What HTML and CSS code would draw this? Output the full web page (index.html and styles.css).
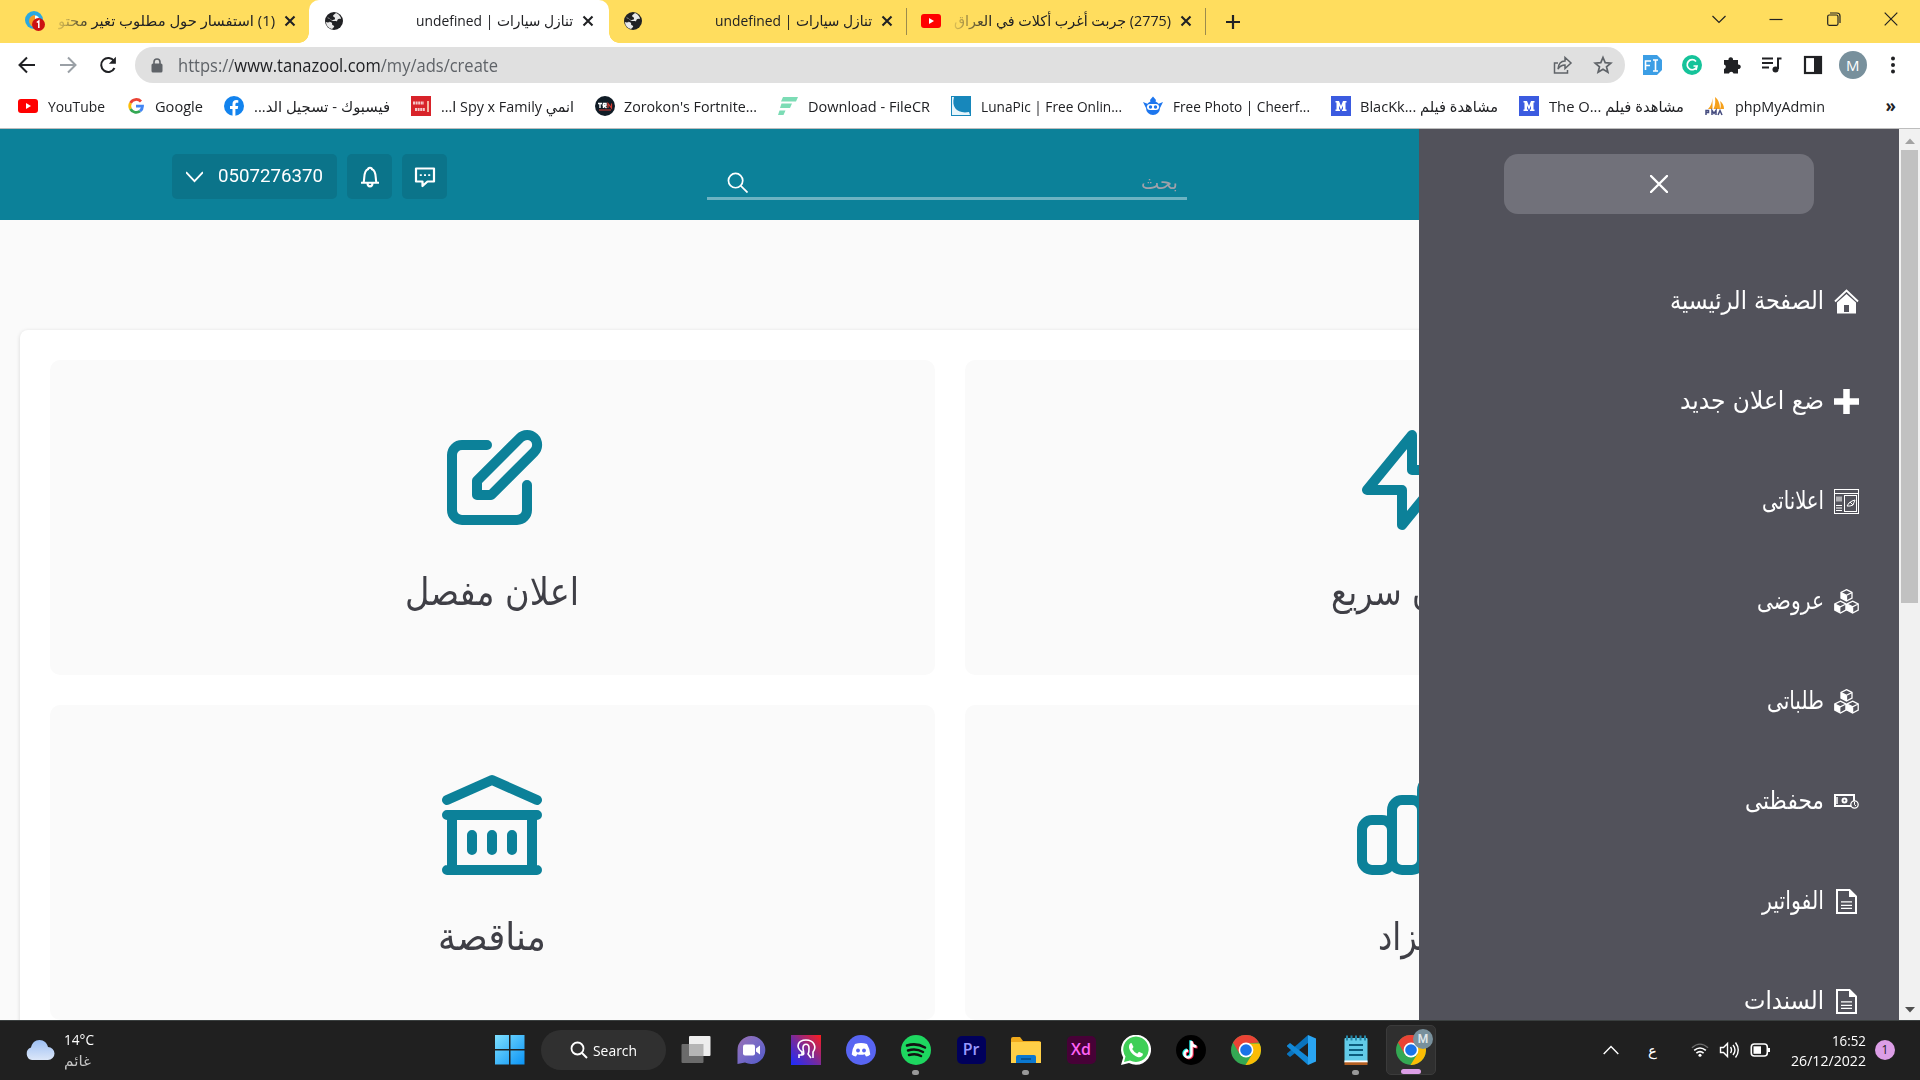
FILE: index.html
```html
<!DOCTYPE html>
<html lang="ar">
<head>
<meta charset="utf-8">
<title>تنازل سيارات</title>
<link rel="stylesheet" href="styles.css">
</head>
<body>
<svg class="defs" width="0" height="0">
  <symbol id="globe" viewBox="0 0 20 20"><circle cx="10" cy="10" r="9" fill="#202124"/><path d="M3 7c3-1 2 2 5 2s3-1 3-2-2-1-2-2 2-2 3-3c3 1 5 4 5 6-3-1-4 1-4 3-2 0-5 0-5 2s3 1 2 3l-2 2c-4-1-6-4-6-7 2 1 3 0 4 0" fill="#fff" opacity=".9"/><path d="M3 7c2 0 3 1 4 2s3 1 5 1 1 3-1 3-5-3-8-3z" fill="#202124"/></symbol>
  <symbol id="x" viewBox="0 0 12 12"><path d="M1.5 1.5l9 9m0-9l-9 9" stroke="#202124" stroke-width="2.1"/></symbol>
  <symbol id="yt" viewBox="0 0 20 20"><rect y="3" width="20" height="14" rx="3" fill="red"/><path d="M8 7l5 3-5 3z" fill="#fff"/></symbol>
  <symbol id="chrome" viewBox="0 0 30 30"><circle cx="15" cy="15" r="15" fill="#34a853"/><path d="M2 7.500A15 15 0 0 1 28 7.500L15 8.500 8.500 18.800z" fill="#ea4335"/><path d="M15 8.500H28.500A15 15 0 0 1 14.500 30L21.500 18.700z" fill="#fbbc04"/><circle cx="15" cy="15" r="7.400" fill="#fff"/><circle cx="15" cy="15" r="5.800" fill="#1a73e8"/></symbol>
  <symbol id="boxes" viewBox="0 0 25 25"><path d="M12.500.7l5.500 2.800v5.500l-5.500 3-5.500-3V3.500zM7 3.500l5.500 2.800L18 3.500M12.500 6.300V12M6.400 12.200l5.500 2.800v6l-5.500 3-5.600-3v-6zM.8 15l5.600 2.800 5.500-2.800M18.600 12.200l5.600 2.800v6l-5.600 3-5.500-3v-6zM13.100 15l5.500 2.800 5.600-2.800M18.600 17.800V24" fill="none" stroke="#fff" stroke-width="1.300"/><path d="M7 3.500l5.500 2.800V12L7 9zM.8 15l5.600 2.800V24L.8 21zM13.100 15l5.500 2.800V24l-5.500-3z" fill="#fff"/></symbol>
  <symbol id="doc" viewBox="0 0 25 25"><path d="M3 1h12.500L22 7.500V24H3z" fill="none" stroke="#fff" stroke-width="2"/><path d="M15 0v8h8z" fill="#fff"/><path d="M7 12.800h11M7 16.300h11M7 19.300h11" stroke="#fff" stroke-width="1.300"/></symbol>
  <symbol id="m" viewBox="0 0 20 20"><rect width="20" height="20" fill="#3b5be0"/><path d="M4.500 5H8l2 5 2-5h3.500v1.500h-1v7h1V15h-4.500v-1.500h1v-4L10 14l-2-4.500v4h1V15H4.500v-1.500h1v-7h-1z" fill="#fff"/></symbol>
</svg>

<header class="tabs">
  <div class="tab tab-first">
    <svg class="ico20" viewBox="0 0 20 20"><circle cx="9" cy="9" r="9" fill="#29a9e1"/><circle cx="10" cy="9" r="4.500" fill="#fff"/><path d="M10 4a6 6 0 0 0 0 12z" fill="#f59a23"/><circle cx="13.500" cy="13.500" r="6.500" fill="#c11"/><path d="M11.800 11.500l2-1.500v7" stroke="#fff" stroke-width="1.500" fill="none"/></svg>
    <span class="fade"><span class="fit" dir="rtl" data-w="217">(1) استفسار حول مطلوب تغير محتو</span></span>
    <svg class="close"><use href="#x"/></svg>
  </div>
  <div class="tab tab-active">
    <svg class="ico20"><use href="#globe"/></svg>
    <span class="fit" data-w="157">undefined | تنازل سيارات</span>
    <svg class="close"><use href="#x"/></svg>
  </div>
  <div class="tab tab-third">
    <svg class="ico20"><use href="#globe"/></svg>
    <span class="fit" data-w="157">undefined | تنازل سيارات</span>
    <svg class="close"><use href="#x"/></svg>
  </div>
  <div class="tab tab-fourth">
    <svg class="ico20"><use href="#yt"/></svg>
    <span class="fade"><span class="fit" dir="rtl" data-w="217">(2775) جربت أغرب أكلات في العراق</span></span>
    <svg class="close"><use href="#x"/></svg>
  </div>
  <svg class="plus" viewBox="0 0 14 14"><path d="M7 0v14M0 7h14" stroke="#202124" stroke-width="2.200"/></svg>
  <div class="window-buttons">
    <svg viewBox="0 0 14 14"><path d="M.5 4l6.500 6.500L13.500 4"/></svg>
    <svg viewBox="0 0 14 14"><path d="M.5 7.500h13"/></svg>
    <svg viewBox="0 0 14 14"><rect x=".7" y="3" width="10.300" height="10.300" rx="1.500"/><path d="M3 1h7a3 3 0 0 1 3 3v7"/></svg>
    <svg viewBox="0 0 14 14"><path d="M.7.7l12.600 12.600m0-12.600L.7 13.300"/></svg>
  </div>
</header>

<div class="toolbar">
  <svg class="nav" viewBox="0 0 20 20"><path d="M18 10H3m7-7.500L2.500 10l7.500 7.500" stroke="#202124"/></svg>
  <svg class="nav" viewBox="0 0 20 20"><path d="M2 10h15m-7-7.500l7.500 7.500-7.500 7.500" stroke="#9aa0a6"/></svg>
  <svg class="nav" viewBox="0 0 20 20"><path d="M16.500 13A7 7 0 1 1 16 6" stroke="#202124"/><path d="M17.900 1.800v7h-7z" fill="#202124"/></svg>
  <div class="address">
    <svg class="lock" viewBox="0 0 12 15"><path d="M3 6V4a3 3 0 0 1 6 0v2" fill="none" stroke="#5f6368" stroke-width="1.600"/><rect x=".5" y="5.500" width="11" height="9" rx="1.500" fill="#5f6368"/></svg>
    <span class="fit url" data-w="320">https://<em>www.tanazool.com</em>/my/ads/create</span>
    <svg class="act share" viewBox="0 0 20 20"><path d="M5 8H1.500v10h13v-3M5 14c.5-5 3-8 7-8V2.500l6 5.500-6 5.500V10c-3 0-5 1-7 4z"/></svg>
    <svg class="act" viewBox="0 0 20 20"><path d="M10 2.500l2.200 5.200 5.600.4-4.300 3.700 1.400 5.500-4.900-3-4.900 3 1.400-5.500-4.300-3.700 5.600-.4z" stroke-width="1.700"/></svg>
  </div>
  <div class="extensions">
    <svg viewBox="0 0 20 20"><path d="M1 0h14l5 5v10l-5 5H1z" fill="#3c9ee5"/><path d="M3.500 15V6H9M3.500 10.500H8M11 5h5M11 16h5M13.500 5v11" stroke="#fff" stroke-width="1.600" fill="none"/></svg>
    <svg viewBox="0 0 20 20"><circle cx="10" cy="10" r="10" fill="#15c39a"/><path d="M14 6.500A5 5 0 1 0 15 11h-3.500M15 11l-1 4" fill="none" stroke="#fff" stroke-width="1.700"/></svg>
    <svg viewBox="0 0 20 20"><path d="M2 5h4.500a2.300 2.300 0 1 1 4.500 0H16v4.500a2.300 2.300 0 1 1 0 4.500v4.500h-4.500a2.300 2.300 0 0 0-4.500 0H2V14a2.300 2.300 0 0 0 0-4.500z" fill="#202124"/></svg>
    <svg viewBox="0 0 20 20"><path d="M0 3.500h11M0 8h11M0 12.500h7M19.500 3.500H16V14" stroke="#202124" stroke-width="2" fill="none"/><circle cx="13.500" cy="14.500" r="3" fill="#202124"/></svg>
    <svg viewBox="0 0 20 20"><rect x="2" y="2" width="16" height="16" fill="none" stroke="#202124" stroke-width="2.200"/><path d="M11 2h7v16h-7z" fill="#202124"/></svg>
    <div class="avatar">M</div>
    <svg viewBox="0 0 20 20" fill="#202124"><circle cx="10" cy="3.500" r="2"/><circle cx="10" cy="10" r="2"/><circle cx="10" cy="16.500" r="2"/></svg>
  </div>
</div>

<nav class="bookmarks">
  <div><svg><use href="#yt"/></svg><span class="fit" data-w="57">YouTube</span></div>
  <div><svg viewBox="0 0 20 20" fill="none" stroke-width="2.800"><path d="M15 5.500A6.500 6.500 0 0 0 4.500 7" stroke="#ea4335"/><path d="M4.500 7a6.500 6.500 0 0 0 0 6" stroke="#fbbc05"/><path d="M4.500 13A6.500 6.500 0 0 0 14 15.200" stroke="#34a853"/><path d="M14 15.200A6.500 6.500 0 0 0 16.500 10.200H10" stroke="#4285f4"/></svg><span class="fit" data-w="48">Google</span></div>
  <div><svg viewBox="0 0 20 20"><circle cx="10" cy="10" r="10" fill="#1283ee"/><path d="M8.500 20v-7H6v-3h2.500V8c0-2.600 1.500-4 3.800-4l2 .2v2.500H13c-1.200 0-1.600.7-1.600 1.500V10h2.800l-.5 3h-2.300v7z" fill="#fff"/></svg><span class="fit" dir="rtl" data-w="136">فيسبوك - تسجيل الد...</span></div>
  <div><svg viewBox="0 0 20 20"><rect width="20" height="20" fill="#d8232a"/><path d="M2 7h11M4 13.500h10" stroke="#fff" stroke-width="3" stroke-dasharray="2 .6" opacity=".75"/><path d="M17 5v11" stroke="#f5b5a0" stroke-width="2"/></svg><span class="fit" dir="rtl" data-w="133">انمي Spy x Family ا...</span></div>
  <div><svg viewBox="0 0 20 20"><circle cx="10" cy="10" r="10" fill="#101c26"/><path d="M3 7.500h4M5 7v5M8.500 12V7.500h2.500v2H8.500l3 2.500" stroke="#fff" stroke-width="1.400" fill="none"/><path d="M13 12V7.500l3.500 4.500V7.500M4 14h12" stroke="#d43b32" stroke-width="1.200" fill="none"/></svg><span class="fit" data-w="133">Zorokon's Fortnite...</span></div>
  <div><svg viewBox="0 0 20 20" fill="#7cdcb5"><path d="M5 1h15l-2 4.500H3zM3.500 7.500H14L12 12H2zM1.500 14.500h6L5.500 19H0z"/></svg><span class="fit" data-w="122">Download - FileCR</span></div>
  <div><svg viewBox="0 0 20 20"><rect width="20" height="20" fill="#1787bb"/><path d="M3 1c-3 11 4 17 15 15l1 3H1V1z" fill="#e6f5fb"/></svg><span class="fit" data-w="141">LunaPic | Free Onlin...</span></div>
  <div><svg viewBox="0 0 20 20" fill="#1d76ee"><ellipse cx="10" cy="12" rx="7" ry="7"/><path d="M0 6l5 2-2 4zM20 6l-5 2 2 4zM7 4l3-3.500L13 4l-1 3H8z"/><rect x="4" y="8" width="12" height="6" rx="3" fill="#fff"/><circle cx="7.500" cy="11" r="1.700"/><circle cx="12.500" cy="11" r="1.700"/></svg><span class="fit" data-w="137">Free Photo | Cheerf...</span></div>
  <div><svg><use href="#m"/></svg><span class="fit" data-w="138">BlacKk... مشاهدة فيلم</span></div>
  <div><svg><use href="#m"/></svg><span class="fit" data-w="135">The O... مشاهدة فيلم</span></div>
  <div><svg viewBox="0 0 20 20"><path d="M3 13c3-3 4-6 4.500-11v11zM8.500 13c2-4 2-8 1.500-12 4 3 5 8 5 12zM15 13c1-2 1-5 0-8 3 2 4 5 4 8z" fill="#f6a01a"/><path d="M1 19v-4.500h2.500v2H1M7 19v-4.500l2 3 2-3V19M13 19l2-4.500 2 4.500" stroke="#474d80" stroke-width="1.500" fill="none"/></svg><span class="fit" data-w="90">phpMyAdmin</span></div>
  <b class="more">»</b>
</nav>

<div class="viewport">
  <main class="page">
    <div class="topbar">
      <div class="account">
        <svg viewBox="0 0 16 16"><path d="M0 3l8 8.500L16 3" fill="none" stroke="#fff" stroke-width="1.700"/></svg>
        <span class="fit phone" data-w="105">0507276370</span>
      </div>
      <div class="square"><svg viewBox="0 0 22 22"><path d="M4.500 16.500C6 13 4 4.500 9 3.200c0-2 4-2 4 0 5 1.300 3 9.800 4.500 13.300M2 16.800h18M8.500 17c0 4.500 5 4.500 5 0" fill="none" stroke="#fff" stroke-width="2.100"/></svg></div>
      <div class="square"><svg viewBox="0 0 22 22"><path d="M2 2.500h18v13h-6.500L8.500 20v-4.500H2z" fill="none" stroke="#fff" stroke-width="2.200" stroke-linejoin="round"/><path d="M5.800 9.200h2m2.200 0h2m2.200 0h2" stroke="#fff" stroke-width="1.800"/></svg></div>
      <div class="search">
        <svg viewBox="0 0 22 22"><circle cx="9" cy="9" r="7.500"/><path d="M14.500 14.500l7 7"/></svg>
        <span class="fit" dir="rtl" data-w="37">بحث</span>
      </div>
    </div>
    <section class="panel">
      <article class="tile"><svg viewBox="0 0 24 24"><path d="M11 5H6a2 2 0 00-2 2v11a2 2 0 002 2h11a2 2 0 002-2v-5m-1.414-9.414a2 2 0 112.828 2.828L11.828 15H9v-2.828l8.586-8.586z"/></svg><h2><span class="fit" dir="rtl" data-w="174">اعلان مفصل</span></h2></article>
      <article class="tile"><svg viewBox="0 0 24 24"><path d="M13 10V3L4 14h7v7l9-11h-7z"/></svg><h2><span class="fit" dir="rtl" data-w="152">اعلان سريع</span></h2></article>
      <article class="tile"><svg viewBox="0 0 24 24"><path d="M8 14v3m4-3v3m4-3v3M3 21h18M3 10h18M3 7l9-4 9 4M4 10h16v11H4V10z"/></svg><h2><span class="fit" dir="rtl" data-w="108">مناقصة</span></h2></article>
      <article class="tile"><svg viewBox="0 0 24 24"><path d="M9 19v-6a2 2 0 00-2-2H5a2 2 0 00-2 2v6a2 2 0 002 2h2a2 2 0 002-2zm0 0V9a2 2 0 012-2h2a2 2 0 012 2v10m-6 0a2 2 0 002 2h2a2 2 0 002-2m0 0V5a2 2 0 012-2h2a2 2 0 012 2v14a2 2 0 01-2 2h-2a2 2 0 01-2-2z"/></svg><h2><span class="fit" dir="rtl" data-w="58">مزاد</span></h2></article>
    </section>
    <aside class="drawer">
      <button class="drawer-close"><svg viewBox="0 0 18 18"><path d="M1 1l16 16M17 1L1 17"/></svg></button>
      <div class="item"><span class="fit" dir="rtl" data-w="154">الصفحة الرئيسية</span><svg viewBox="0 0 25 25"><path d="M1 12.500L12.500 1.500 24 12.500" fill="none" stroke="#fff" stroke-width="1.900"/><path d="M3 13.500L12.500 5 22 13.500V24h-7v-8h-5v8H3zM3 23h19v1.500H3z" fill="#fff"/></svg></div>
      <div class="item"><span class="fit" dir="rtl" data-w="144">ضع اعلان جديد</span><svg viewBox="0 0 25 25"><path d="M12.500 0v25M0 12.500h25" stroke="#fff" stroke-width="6.500"/></svg></div>
      <div class="item"><span class="fit" dir="rtl" data-w="62">اعلاناتى</span><svg viewBox="0 0 25 25" fill="none" stroke="#fff"><rect x=".5" y=".5" width="24" height="24"/><path d="M0 4.500h25M2 19h6M2 21.500h6M2 16.500h6"/><path d="M2 10h6" stroke-width="5" opacity=".55"/><rect x="10.500" y="6.500" width="12" height="16"/><path d="M13 17l2-3 3-2 3-1-2 5-3 1-3 0m3-4l3 3"/></svg></div>
      <div class="item"><span class="fit" dir="rtl" data-w="67">عروضى</span><svg><use href="#boxes"/></svg></div>
      <div class="item"><span class="fit" dir="rtl" data-w="57">طلباتى</span><svg><use href="#boxes"/></svg></div>
      <div class="item"><span class="fit" dir="rtl" data-w="79">محفظتى</span><svg viewBox="0 0 25 25" fill="none" stroke="#fff"><path d="M20 12V6H1v11h16" stroke-width="2"/><circle cx="10.500" cy="11.500" r="2" stroke-width="2"/><path d="M3 8v7" stroke-width="1.500"/><circle cx="20.500" cy="15.500" r="3.700" stroke-width="1.300"/><path d="M20.500 13v2.700l1.500 1.300"/></svg></div>
      <div class="item"><span class="fit" dir="rtl" data-w="62">الفواتير</span><svg><use href="#doc"/></svg></div>
      <div class="item"><span class="fit" dir="rtl" data-w="80">السندات</span><svg><use href="#doc"/></svg></div>
    </aside>
  </main>
  <div class="scrollbar">
    <svg viewBox="0 0 10 6"><path d="M0 6l5-5.500L10 6z" fill="#a3a3a3"/></svg>
    <div class="thumb"></div>
    <svg class="down" viewBox="0 0 10 6"><path d="M0 0l5 5.500L10 0z" fill="#505050"/></svg>
  </div>
</div>

<footer class="taskbar">
  <div class="weather">
    <svg viewBox="0 0 30 20"><defs><linearGradient id="cl" x2="0" y2="1"><stop stop-color="#9dc0f5"/><stop offset="1" stop-color="#dbe6f8"/></linearGradient></defs><path d="M7 20a6.500 6.500 0 0 1-1-12.500C7 3 10 0 14.500 0S22 3 23 7a6.500 6.500 0 0 1 0 13z" fill="url(#cl)"/></svg>
    <div><span class="fit" data-w="30">14°C</span><span class="fit dim" dir="rtl" data-w="27">غائم</span></div>
  </div>
  <div class="apps">
    <div><svg viewBox="0 0 30 30"><defs><linearGradient id="wn" x2="1" y2="1"><stop stop-color="#7fe0ff"/><stop offset="1" stop-color="#0a93f5"/></linearGradient></defs><path d="M0 0h14v14H0zM15.500 0h14v14h-14zM0 15.500h14v14H0zM15.500 15.500h14v14h-14z" fill="url(#wn)"/></svg></div>
    <div class="pill"><svg viewBox="0 0 18 18"><circle cx="7.500" cy="7.500" r="6" fill="none" stroke="#fff" stroke-width="1.800"/><path d="M12 12l5 5" stroke="#fff" stroke-width="2"/></svg><span class="fit" data-w="44">Search</span></div>
    <div><svg viewBox="0 0 30 30"><rect x=".5" y="9" width="22" height="19" rx="1" fill="#6b6b6b"/><rect x="8" y="1" width="21.500" height="20" rx="1" fill="#eee"/><rect x="8" y="9" width="14.500" height="12" fill="#b5b5b5"/></svg></div>
    <div><svg viewBox="0 0 30 30"><defs><linearGradient id="tm" x2="1" y2="1"><stop stop-color="#9a6fb0"/><stop offset=".4" stop-color="#7e6cc4"/><stop offset="1" stop-color="#5059c9"/></linearGradient></defs><path d="M15 1a14 14 0 1 1-6 26.500L1.500 29V15A14 14 0 0 1 15 1z" fill="url(#tm)"/><rect x="7" y="9.500" width="12" height="11" rx="2" fill="#fff"/><path d="M20 13.500l4-3v9l-4-3z" fill="#fff"/></svg></div>
    <div><svg viewBox="0 0 30 30"><defs><linearGradient id="pa" x1="0" y1="1" x2="1" y2="0"><stop stop-color="#1a2cff"/><stop offset=".5" stop-color="#7a2a99"/><stop offset="1" stop-color="#ff1c1c"/></linearGradient></defs><rect width="30" height="30" fill="url(#pa)"/><path d="M8 23v-3h3v-3C4 12 7 5 15 5s11 7 7 12v6M12 20c2-2 0-4 0-7 0-5 6-5 6 0s0 4-1 6l3 4" fill="none" stroke="#fff" stroke-width="1.600"/></svg></div>
    <div><svg viewBox="0 0 30 30"><circle cx="15" cy="15" r="15" fill="#5865f2"/><path d="M9 9q6-2 12 0 3 5 3.300 10.500-2 1.800-4.300 2l-1.300-2.200q-3.700 1-7.400 0L10 21.500q-2.300-.2-4.300-2Q6 14 9 9z" fill="#fff"/><circle cx="12" cy="15.500" r="1.900" fill="#5865f2"/><circle cx="18" cy="15.500" r="1.900" fill="#5865f2"/></svg></div>
    <div class="run"><svg viewBox="0 0 30 30"><circle cx="15" cy="15" r="15" fill="#1ed760"/><path d="M6 10.500q9.500-3 18 2M7 15.500q8-2.500 15 1.500M8 20q7-2 12 1" fill="none" stroke="#121212" stroke-width="2.500" stroke-linecap="round"/></svg></div>
    <div><span class="adobe pr">Pr</span></div>
    <div class="run"><svg viewBox="0 0 30 30"><path d="M0 4a2 2 0 0 1 2-2h7l3 4h16a2 2 0 0 1 2 2v20H0z" fill="#f0aa1c"/><path d="M0 7h30v21H0z" fill="#ffcf47"/><path d="M5 28v-6a2 2 0 0 1 2-2h16a2 2 0 0 1 2 2v6z" fill="#0b78d0"/><path d="M10 24h10" stroke="#064a85" stroke-width="1.500"/></svg></div>
    <div><span class="adobe xd">Xd</span></div>
    <div><svg viewBox="0 0 30 30"><path d="M0 30l2.200-7.500A15 15 0 1 1 8 28z" fill="#fff"/><path d="M3 27l1.500-5.500A12.700 12.700 0 1 1 9 25.500z" fill="#3fcf57"/><path d="M10.500 8l2 4-1.300 2q2 3.500 5 4.700l1.800-2 4 2c0 3-3 4-5.500 3.200C12 20.500 8.500 16 8 12.500 7.800 10 9 8 10.500 8z" fill="#fff"/></svg></div>
    <div><svg viewBox="0 0 30 30"><circle cx="15" cy="15" r="15" fill="#000"/><path d="M15.500 6v13a3.500 3.500 0 1 1-3.500-3.500M15.500 7c.5 3 2.500 4.500 5 4.500" transform="translate(-1 -.7)" stroke="#25f4ee" fill="none" stroke-width="2.400"/><path d="M15.500 6v13a3.500 3.500 0 1 1-3.500-3.500M15.500 7c.5 3 2.500 4.500 5 4.500" transform="translate(1 .7)" stroke="#fe2c55" fill="none" stroke-width="2.400"/><path d="M15.500 6v13a3.500 3.500 0 1 1-3.500-3.500M15.500 7c.5 3 2.500 4.500 5 4.500" stroke="#fff" fill="none" stroke-width="2.400"/></svg></div>
    <div><svg><use href="#chrome"/></svg></div>
    <div><svg viewBox="0 0 30 30"><path d="M22 0l8 3.500v23L22 30z" fill="#2aa5f2"/><path d="M22 0v8L4 22 1 19.500v-1z" fill="#0a74be"/><path d="M22 30v-8L4 8 1 10.500v1z" fill="#1289d8"/></svg></div>
    <div class="run"><svg viewBox="0 0 30 30"><rect x="3.500" y="3" width="23" height="25" rx="1" fill="#62cbe8"/><path d="M3.500 27h23v3h-23z" fill="#b35f22"/><path d="M3.500 25.500h23v1.800h-23z" fill="#fff"/><path d="M8 10h14M8 15h14M8 20h14" stroke="#0c5c7d" stroke-width="2"/><path d="M5 3h20" stroke="#2488a8" stroke-width="5" stroke-dasharray="2 2.500"/></svg></div>
    <div class="current"><svg><use href="#chrome"/></svg><i>M</i></div>
  </div>
  <div class="tray">
    <svg class="up" viewBox="0 0 16 10"><path d="M.7 9L8 1.500 15.300 9"/></svg>
    <span class="lang">ع</span>
    <svg class="net" viewBox="0 0 20 16"><path d="M1 5.500q9-8 18 0" opacity=".35"/><path d="M3.500 8.500q6.500-5.500 13 0M6 11.500q4-3.500 8 0" stroke-width="1.800"/><circle cx="10" cy="13.800" r="1.700" fill="#fff" stroke="none"/></svg>
    <svg class="vol" viewBox="0 0 20 18"><path d="M1 6.500h3l4-4v13l-4-4H1zM11 6q2 3 0 6M13.500 4q4 5 0 10M16 1.500q5.500 7.500 0 15"/></svg>
    <svg class="bat" viewBox="0 0 20 14"><rect x=".8" y="1" width="16" height="12" rx="3" stroke-width="1.600"/><path d="M18 5v4" stroke-width="3"/><rect x="3" y="3.300" width="7.500" height="7.500" fill="#fff" stroke="none"/></svg>
    <div class="clock"><span class="fit" data-w="34">16:52</span><span class="fit" data-w="75">26/12/2022</span></div>
    <span class="count">1</span>
  </div>
</footer>
<script src="fit.js"></script>
</body>
</html>
```
FILE: styles.css
```css
* { box-sizing: border-box; }
body { margin: 0; width: 1920px; height: 1080px; overflow: hidden; background: #fff; display: flex; flex-direction: column; font: 15px/20px "Open Sans", "DejaVu Sans", sans-serif; color: #202124; }
svg { display: block; flex: none; }
.defs { position: absolute; }
.fit { display: inline-block; flex: none; white-space: nowrap; transform-origin: left center; }

.tabs { height: 43px; flex: none; display: flex; align-items: center; background: #ffdd5e; }
.tab { height: 43px; display: flex; align-items: center; font-size: 14.500px; }
.tab-first { width: 309px; padding: 0 13px 1px 25px; }
.tab-active { width: 300px; padding: 0 15px 1px 15px; background: #fff; border-radius: 10px 10px 0 0; position: relative; }
.tab-active::before, .tab-active::after { content: ""; position: absolute; bottom: 0; width: 10px; height: 10px; }
.tab-active::before { left: -10px; background: radial-gradient(circle at 0 0, #ffdd5e 9.500px, #fff 10px); }
.tab-active::after { right: -10px; background: radial-gradient(circle at 100% 0, #ffdd5e 9.500px, #fff 10px); }
.tab-third { width: 297px; padding: 0 13px 1px 14px; }
.tab-fourth { width: 300px; padding: 0 13px 1px 14px; border: solid #9c8b4c; border-width: 0 1px; border-image: linear-gradient(transparent 9px, #9c8b4c 9px 34px, transparent 34px) 1; }
.tab .fit { margin-left: auto; }
.tab .close { width: 12px; height: 12px; margin-left: 9px; }
.fade { margin-left: auto; -webkit-mask-image: linear-gradient(90deg, rgba(0,0,0,.15), #000 35px); mask-image: linear-gradient(90deg, rgba(0,0,0,.15), #000 35px); }
.ico20 { width: 20px; height: 20px; }
.plus { width: 14px; height: 14px; margin-left: 20px; }
.window-buttons { margin-left: auto; display: flex; gap: 43.500px; padding: 0 22px 6px 0; }
.window-buttons svg { width: 14px; height: 14px; fill: none; stroke: #222; stroke-width: 1.2; }

.toolbar { height: 45px; flex: none; display: flex; align-items: center; padding: 0 17px 1px 17px; }
.nav { width: 20px; height: 20px; margin-right: 20.500px; fill: none; stroke-width: 2; }
.nav:nth-child(3) { margin-right: 17px; }
.address { width: 1490px; flex: none; height: 36px; border-radius: 18px; background: #e0e0e0; display: flex; align-items: center; padding: 0 12px 0 16px; }
.lock { width: 12px; height: 15px; margin-right: 15px; }
.url { font-size: 17.500px; line-height: 24px; color: #5f6368; }
.url em { font-style: normal; color: #202124; }
.act { width: 20px; height: 20px; fill: none; stroke: #5f6368; stroke-width: 1.5; }
.share { margin: 0 20px 0 auto; }
.extensions { display: flex; align-items: center; justify-content: space-between; width: 261px; margin-left: auto; }
.extensions svg { width: 20px; height: 20px; }
.avatar { width: 28px; height: 28px; margin: 0 -4px; border-radius: 50%; background: #78909c; color: #fff; text-align: center; line-height: 28px; font-size: 15px; }

.bookmarks { height: 41px; flex: none; display: flex; align-items: center; gap: 21px; padding: 0 24px 5px 18px; border-bottom: 1px solid #bdbdbd; font-size: 15px; }
.bookmarks div { display: flex; align-items: center; gap: 9.700px; }
.bookmarks svg { width: 20px; height: 20px; }
.more { margin-left: auto; font-size: 17px; }

.viewport { height: 891px; flex: none; display: flex; overflow: hidden; }
.page { width: 1899px; position: relative; background: #fafafa; overflow: hidden; }
.topbar { height: 91px; background: #0c8199; display: flex; align-items: flex-start; padding: 25px 0 0 172px; gap: 10px; }
.account, .square { height: 45px; border-radius: 5px; background: #0b748a; display: flex; align-items: center; }
.account { width: 165px; padding-left: 14px; gap: 16px; }
.account svg { width: 17px; height: 17px; margin: 1px -1px 0 0; }
.phone { color: #fff; font: 19px/24px Roboto, sans-serif; margin-top: -2px; }
.square { width: 45px; justify-content: center; }
.square svg { width: 22px; height: 22px; }
.search { width: 480px; height: 46px; margin-left: 250px; border-bottom: 3px solid #6db3c2; display: flex; justify-content: space-between; padding: 18px 9px 0 20px; color: #a1a1aa; font: 19px/20px "DejaVu Sans", sans-serif; }
.search svg { width: 21px; height: 21px; fill: none; stroke: #fff; stroke-width: 1.8; }
.panel { margin: 110px 20px 0; height: 720px; padding: 30px; background: #fff; border-radius: 8px; box-shadow: 0 1px 4px rgba(0,0,0,.14); display: grid; grid-template-columns: 1fr 1fr; grid-auto-rows: 315px; gap: 30px; }
.tile { border-radius: 10px; background: #fafafa; padding-top: 60px; display: flex; flex-direction: column; align-items: center; }
.tile svg { width: 120px; height: 120px; fill: none; stroke: #0c8199; stroke-width: 2; stroke-linecap: round; stroke-linejoin: round; }
.tile h2 { margin: 27px 0 0; font: 38px/50px "DejaVu Sans", sans-serif; color: #3f3f46; height: 50px; }
.drawer { position: absolute; top: 0; right: 0; width: 480px; height: 891px; background: #52525b; padding: 25px 40px 0; color: #fff; overflow: hidden; }
.drawer-close { display: flex; align-items: center; justify-content: center; width: 310px; height: 60px; margin: 0 auto 37px; border: 0; border-radius: 14px; background: #71717a; }
.drawer-close svg { width: 18px; height: 18px; stroke: #fff; stroke-width: 2.4; stroke-linecap: round; }
.item { height: 100px; display: flex; align-items: center; justify-content: flex-end; gap: 10px; font: 25px/36px "DejaVu Sans", sans-serif; }
.item svg { width: 25px; height: 25px; }
.scrollbar { width: 21px; background: #f1f1f1; padding: 9px 2px 7px; display: flex; flex-direction: column; align-items: center; }
.scrollbar svg { width: 10px; height: 6px; }
.thumb { width: 17px; height: 453px; margin-top: 6px; background: #c1c1c1; }
.down { margin-top: auto; }

.taskbar { height: 60px; flex: none; background: #202020; border-top: 1px solid #3a3f3f; padding-bottom: 2px; display: flex; align-items: center; color: #fff; font-size: 15px; }
.weather { display: flex; align-items: center; gap: 9px; width: 485px; padding-left: 25px; }
.weather svg { width: 30px; height: 20px; }
.weather div { display: flex; flex-direction: column; align-items: flex-start; line-height: 21px; }
.dim { color: #c4c4c4; font-size: 14px; }
.apps { display: flex; height: 50px; align-items: center; gap: 5px; }
.apps > div { position: relative; width: 50px; height: 50px; display: flex; align-items: center; justify-content: center; }
.apps svg { width: 30px; height: 30px; }
.apps > .pill { width: 125px; height: 40px; margin: 0 0 0 1px; border-radius: 20px; background: #303030; justify-content: flex-start; padding-left: 29px; gap: 5px; }
.apps .pill svg { width: 18px; height: 18px; }
.run::after, .current::after { content: ""; position: absolute; bottom: 0; left: 21px; width: 7px; height: 5px; border-radius: 3px; background: #999; }
.current::after { left: 14px; width: 20px; background: #dc9ee6; }
.current { border-radius: 5px; background: #2f2f2f; border: 1px solid #3b3b3b; }
.current i { position: absolute; top: 3px; left: 26px; width: 20px; height: 20px; border-radius: 50%; background: #78909c; color: #dfe5e8; font: 600 12px/20px Roboto, sans-serif; text-align: center; }
.adobe { width: 29px; height: 28px; border-radius: 5px; text-align: center; font: 600 16px/26px "Open Sans", sans-serif; }
.pr { background: #00005b; color: #9999ff; }
.xd { background: #470137; color: #ff61f6; }
.tray { margin-left: auto; display: flex; align-items: center; padding-right: 25px; }
.tray svg { fill: none; stroke: #fff; stroke-width: 1.4; }
.tray .up { width: 16px; height: 10px; margin-right: 29px; }
.lang { width: 10px; margin: 3px 33px 0 0; font: 15px/20px "DejaVu Sans", sans-serif; }
.net { width: 18px; height: 16px; margin-right: 10px; }
.vol { width: 21px; height: 18px; margin-right: 10px; }
.bat { width: 21px; height: 14px; margin-right: 15px; }
.clock { width: 80px; display: flex; flex-direction: column; align-items: flex-end; line-height: 20px; }
.count { width: 20px; height: 20px; margin-left: 9px; border-radius: 50%; background: #dc9ee6; color: #222; font-size: 12px; text-align: center; }
```
FILE: fit.js
```js
// Condense each label horizontally to the width reserved for it.
document.querySelectorAll(".fit").forEach(function (label) {
  var natural = label.getBoundingClientRect().width;
  var wanted = Number(label.dataset.w);
  label.style.transform = "scaleX(" + wanted / natural + ")";
  label.style.marginRight = wanted - natural + "px";
});
```
